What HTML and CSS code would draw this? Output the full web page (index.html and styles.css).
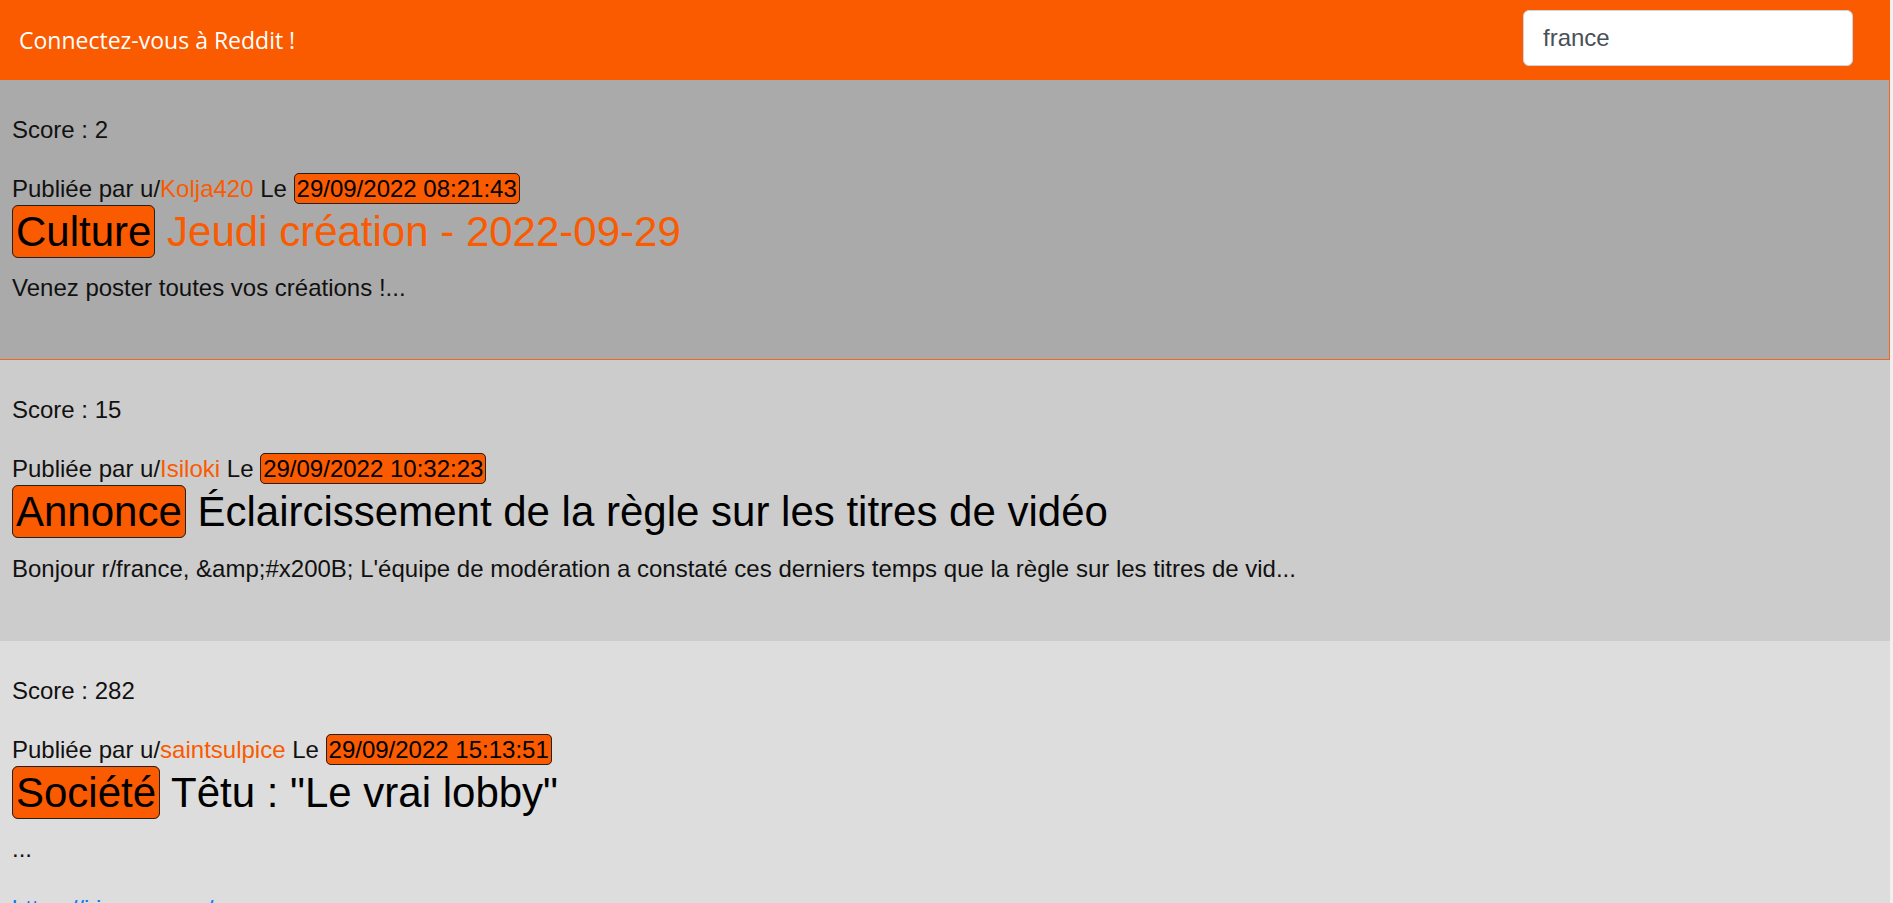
FILE: index.html
```html
<!DOCTYPE html>
<html lang="fr">
<head>
<meta charset="utf-8">
<title>Reddit</title>
<link rel="stylesheet" href="styles.css">
</head>
<body>
<div class="page">
  <header class="topbar">
    <span class="brand">Connectez-vous à Reddit !</span>
    <input class="search" type="text" value="france">
  </header>
  <main class="posts">
    <article class="post post-dark post-active">
      <p class="score">Score : 2</p>
      <p class="meta">Publiée par u/<span class="author">Kolja420</span> Le <span class="date">29/09/2022 08:21:43</span></p>
      <h3 class="title"><span class="flair">Culture</span> <span class="title-text">Jeudi création - 2022-09-29</span></h3>
      <p class="desc">Venez poster toutes vos créations !...</p>
    </article>
    <article class="post post-mid">
      <p class="score">Score : 15</p>
      <p class="meta">Publiée par u/<span class="author">Isiloki</span> Le <span class="date">29/09/2022 10:32:23</span></p>
      <h3 class="title"><span class="flair">Annonce</span> <span class="title-text">Éclaircissement de la règle sur les titres de vidéo</span></h3>
      <p class="desc">Bonjour r/france, &amp;amp;#x200B; L'équipe de modération a constaté ces derniers temps que la règle sur les titres de vid...</p>
    </article>
    <article class="post post-light">
      <p class="score">Score : 282</p>
      <p class="meta">Publiée par u/<span class="author">saintsulpice</span> Le <span class="date">29/09/2022 15:13:51</span></p>
      <h3 class="title"><span class="flair">Société</span> <span class="title-text">Têtu : "Le vrai lobby"</span></h3>
      <p class="desc">...</p>
      <p class="desc"><a class="link" href="#">https://i.imgur.com/</a></p>
    </article>
  </main>
</div>
</body>
</html>
```
FILE: styles.css
```css
html, body {
  margin: 0;
  padding: 0;
  height: 100%;
  overflow: hidden;
}
body {
  background: #f0f0f0;
  font-family: "Liberation Sans", Arial, sans-serif;
  font-size: 24px;
  line-height: 1.5;
  color: #111;
}
.page {
  margin-right: 3px;
}
.topbar {
  height: 80px;
  box-sizing: border-box;
  background: #fa5a00;
  display: flex;
  align-items: center;
  justify-content: space-between;
  padding: 0 37px 4px 19px;
}
.brand {
  font-family: "Open Sans", "Noto Sans", sans-serif;
  font-size: 23px;
  color: #fff;
  padding-top: 4px;
}
.search {
  width: 330px;
  height: 56px;
  box-sizing: border-box;
  border: 1px solid #ced4da;
  border-radius: 6px;
  padding: 0 19px;
  font-family: "Liberation Sans", Arial, sans-serif;
  font-size: 24px;
  color: #495057;
  background: #fff;
  outline: none;
}
.posts {
  display: flex;
  flex-direction: column;
}
.post {
  padding: 32px 12px 29px 12px;
  border-bottom: 1px solid transparent;
}
.post-dark { background: #aaaaaa; }
.post-mid { background: #cccccc; }
.post-light { background: #dddddd; }
.post-active {
  border-right: 1px solid #f0651f;
  border-bottom: 1px solid #f0651f;
}
.post p {
  margin: 0 0 24px 0;
}
.post p.score {
  margin-bottom: 23px;
}
.post p.meta {
  margin-bottom: 0;
}
.author {
  color: #fa5a00;
}
.date {
  background: #fa5a00;
  border: 1px solid #222;
  border-radius: 5px;
  padding: 1px 2px;
  color: #000;
}
.title {
  margin: 0 0 13px 0;
  font-size: 42px;
  font-weight: 400;
  line-height: 1.2;
  color: #000;
}
.flair {
  background: #fa5a00;
  border: 1px solid #222;
  border-radius: 6px;
  padding: 2px 3px;
  color: #000;
}
.post-active .title-text {
  color: #fa5a00;
}
.link {
  color: #007bff;
  text-decoration: none;
}
```
